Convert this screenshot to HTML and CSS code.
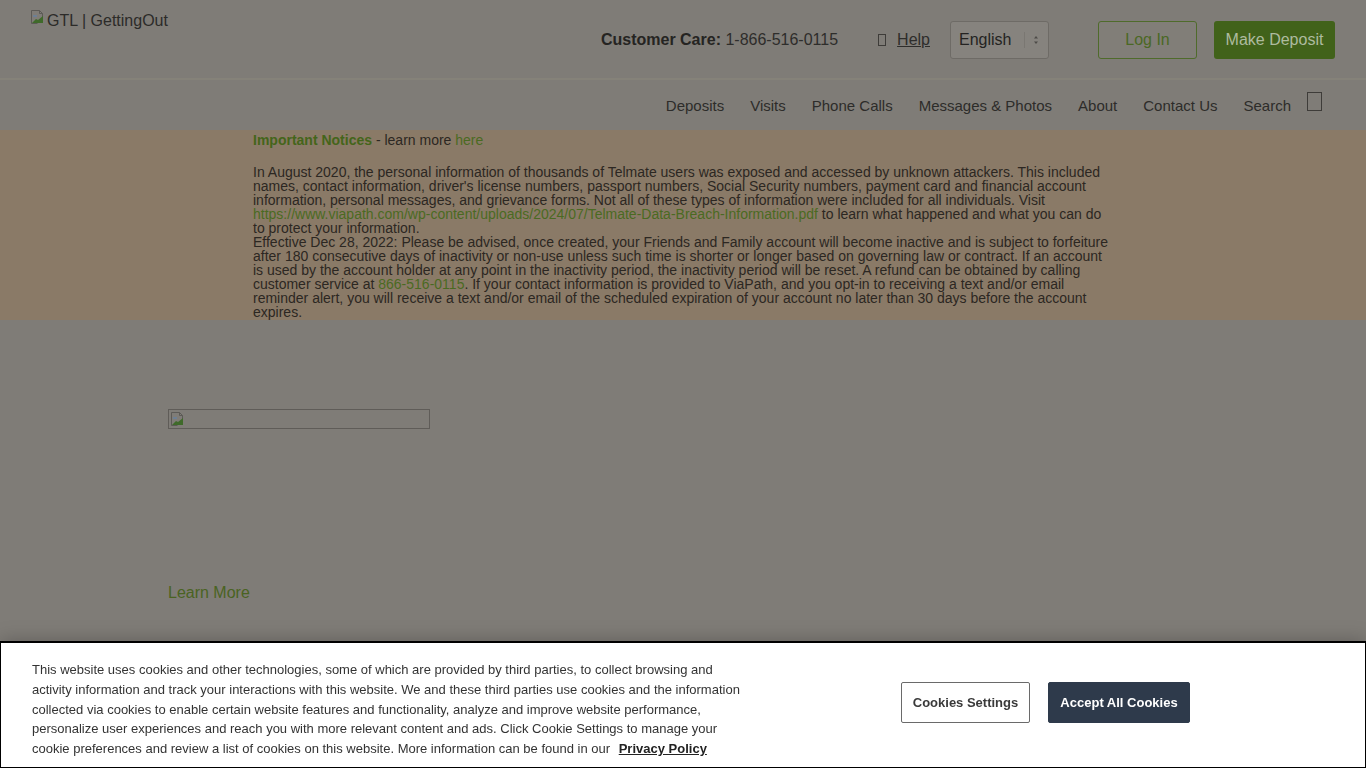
FILE: index.html
```html
<!DOCTYPE html>
<html lang="en">
<head>
<meta charset="utf-8">
<title>GTL | GettingOut</title>
<link rel="stylesheet" href="styles.css">
</head>
<body>
<header class="topbar">
  <a class="logo" href="#">
    <svg class="broken" width="16" height="16" viewBox="0 0 16 16"><path d="M1.5 1.5h8l3 3v4" fill="none" stroke="#5c5a56"/><path d="M1.5 1.5v13h6" fill="none" stroke="#5c5a56"/><path d="M9.5 1.5v3h3" fill="none" stroke="#5c5a56"/><path d="M2 14l4-4 2 1 5-4v7H2z" fill="#3f6a2a"/><path d="M3 6h4v2H3z" fill="#6d7f94"/></svg><span class="logo-text">GTL | GettingOut</span>
  </a>
  <div class="utility">
    <div class="care"><b>Customer Care:</b> 1-866-516-0115</div>
    <a class="help" href="#"><span class="tofu tofu-help"></span><span class="help-label">Help</span></a>
    <div class="lang">
      <span>English</span>
      <span class="lang-sep"></span>
      <svg class="spin" width="6" height="10" viewBox="0 0 6 10"><path d="M3 1L5 3.5H1z M3 9L5 6.5H1z" fill="#4d4b48"/></svg>
    </div>
    <a class="btn-login" href="#">Log In</a>
    <a class="btn-deposit" href="#">Make Deposit</a>
  </div>
</header>
<nav class="mainnav">
  <a href="#">Deposits</a>
  <a href="#">Visits</a>
  <a href="#">Phone Calls</a>
  <a href="#">Messages &amp; Photos</a>
  <a href="#">About</a>
  <a href="#">Contact Us</a>
  <a class="search" href="#">Search <span class="tofu tofu-search"></span></a>
</nav>
<section class="notice">
  <div class="notice-inner">
    <div class="notice-title"><b>Important Notices</b> - learn more <a href="#">here</a></div>
    <p class="notice-p">In August 2020, the personal information of thousands of Telmate users was exposed and accessed by unknown attackers. This included names, contact information, driver's license numbers, passport numbers, Social Security numbers, payment card and financial account information, personal messages, and grievance forms. Not all of these types of information were included for all individuals. Visit <a href="#">https://www.viapath.com/wp-content/uploads/2024/07/Telmate-Data-Breach-Information.pdf</a> to learn what happened and what you can do to protect your information.</p>
    <p class="notice-p">Effective Dec 28, 2022: Please be advised, once created, your Friends and Family account will become inactive and is subject to forfeiture after 180 consecutive days of inactivity or non-use unless such time is shorter or longer based on governing law or contract. If an account is used by the account holder at any point in the inactivity period, the inactivity period will be reset. A refund can be obtained by calling customer service at <a href="#">866-516-0115</a>. If your contact information is provided to ViaPath, and you opt-in to receiving a text and/or email reminder alert, you will receive a text and/or email of the scheduled expiration of your account no later than 30 days before the account expires.</p>
  </div>
</section>
<main class="promo">
  <div class="promo-inner">
    <div class="img-broken">
      <svg class="broken" width="16" height="16" viewBox="0 0 16 16"><path d="M1.5 1.5h8l3 3v4" fill="none" stroke="#5c5a56"/><path d="M1.5 1.5v13h6" fill="none" stroke="#5c5a56"/><path d="M9.5 1.5v3h3" fill="none" stroke="#5c5a56"/><path d="M2 14l4-4 2 1 5-4v7H2z" fill="#3f6a2a"/><path d="M3 6h4v2H3z" fill="#6d7f94"/></svg>
    </div>
    <a class="learn" href="#">Learn More</a>
  </div>
</main>
<div class="cookie-banner">
  <p class="cookie-text">This website uses cookies and other technologies, some of which are provided by third parties, to collect browsing and activity information and track your interactions with this website. We and these third parties use cookies and the information collected via cookies to enable certain website features and functionality, analyze and improve website performance, personalize user experiences and reach you with more relevant content and ads. Click Cookie Settings to manage your cookie preferences and review a list of cookies on this website. More information can be found in our <a class="privacy" href="#">Privacy Policy</a></p>
  <div class="cookie-actions">
    <button class="btn-settings">Cookies Settings</button>
    <button class="btn-accept">Accept All Cookies</button>
  </div>
</div>
</body>
</html>
```
FILE: styles.css
```css
* { box-sizing: border-box; }
html, body { margin: 0; padding: 0; }
body {
  background: #7f7c77;
  font-family: "Liberation Sans", Arial, sans-serif;
  color: #282725;
  height: 768px;
  overflow: hidden;
}
a { text-decoration: none; }

.topbar {
  height: 80px;
  display: flex;
  justify-content: space-between;
  align-items: flex-start;
  padding: 0 31px 0 30px;
  border-bottom: 2px solid #858279;
}
.logo {
  display: flex;
  align-items: flex-start;
  margin-top: 10px;
  color: #2c2b29;
  font-size: 16px;
  line-height: 22px;
}
.logo .broken { margin-top: -1px; }
.logo-text { margin-left: 1px; }

.utility {
  display: flex;
  align-items: center;
  margin-top: 21px;
  height: 38px;
  font-size: 16px;
}
.care { color: #2e2d2b; white-space: nowrap; }
.care b { color: #252422; }
.help {
  display: flex;
  align-items: center;
  margin-left: 40px;
  color: #2e2d2b;
}
.help-label { text-decoration: underline; margin-left: 11px; }
.tofu {
  display: inline-block;
  border: 1px solid #3e3c39;
}
.tofu-help { width: 8px; height: 12px; }
.lang {
  margin-left: 20px;
  width: 99px;
  height: 38px;
  display: flex;
  align-items: center;
  padding-left: 8px;
  background: #86837e;
  border: 1px solid #6e6b66;
  border-radius: 3px;
  color: #242322;
}
.lang-sep {
  width: 1px;
  height: 16px;
  background: #7a7772;
  margin-left: 13px;
}
.spin { margin-left: 8px; }
.btn-login {
  margin-left: 49px;
  width: 99px;
  height: 38px;
  display: flex;
  align-items: center;
  justify-content: center;
  border: 1px solid #4f6b2b;
  border-radius: 3px;
  color: #4b6824;
  background: #817e78;
}
.btn-deposit {
  margin-left: 17px;
  width: 121px;
  height: 38px;
  display: flex;
  align-items: center;
  justify-content: center;
  border-radius: 3px;
  background: #41621a;
  color: #aebb9f;
}

.mainnav {
  height: 50px;
  display: flex;
  justify-content: flex-end;
  align-items: center;
  gap: 26px;
  padding-right: 44px;
  font-size: 15px;
}
.mainnav a { color: #2d2c2a; }
.search { display: flex; align-items: center; }
.tofu-search { width: 15px; height: 19px; margin-left: 16px; margin-top: -8px; }

.notice {
  background: #8a7a67;
  height: 190px;
  font-size: 14px;
  color: #2c2722;
}
.notice-inner {
  width: 860px;
  margin: 0 auto;
}
.notice a { color: #4a6a22; }
.notice-title { line-height: 20px; }
.notice-title b { color: #44651a; }
.notice-p { margin: 0; line-height: 14px; }
.notice-title + .notice-p { margin-top: 15px; }

.promo {
  padding-top: 89px;
}
.promo-inner {
  width: 1030px;
  margin: 0 auto;
  display: flex;
  flex-direction: column;
  align-items: flex-start;
}
.img-broken {
  width: 262px;
  height: 20px;
  border: 1px solid #5f5c58;
  display: flex;
  align-items: flex-start;
  padding: 1px 0 0 1px;
}
.learn {
  margin-top: 155px;
  font-size: 16px;
  line-height: 18px;
  color: #4a6322;
}

.cookie-banner {
  position: fixed;
  left: 0;
  right: 0;
  bottom: 0;
  height: 127px;
  background: #fff;
  border: 1px solid #000;
  border-top-width: 2px;
  box-shadow: 0 0 18px rgba(0, 0, 0, 0.25);
  display: flex;
  align-items: flex-start;
  padding: 17px 0 0 31px;
}
.cookie-text {
  margin: 0;
  width: 720px;
  font-size: 13px;
  line-height: 19.75px;
  color: #333;
}
.privacy {
  color: #222;
  font-weight: bold;
  text-decoration: underline;
  margin-left: 5px;
}
.cookie-actions {
  display: flex;
  gap: 18px;
  margin-left: 149px;
  margin-top: 22px;
}
.btn-settings, .btn-accept {
  font-family: "Liberation Sans", Arial, sans-serif;
  font-size: 13px;
  font-weight: bold;
  height: 41px;
  border-radius: 2px;
  padding: 0;
  white-space: nowrap;
  cursor: pointer;
}
.btn-settings {
  background: #fff;
  color: #3a3a3a;
  border: 1px solid #6a6a6a;
  width: 129px;
}
.btn-accept {
  background: #2e3a4b;
  color: #fff;
  border: 1px solid #2e3a4b;
  width: 142px;
}
```
